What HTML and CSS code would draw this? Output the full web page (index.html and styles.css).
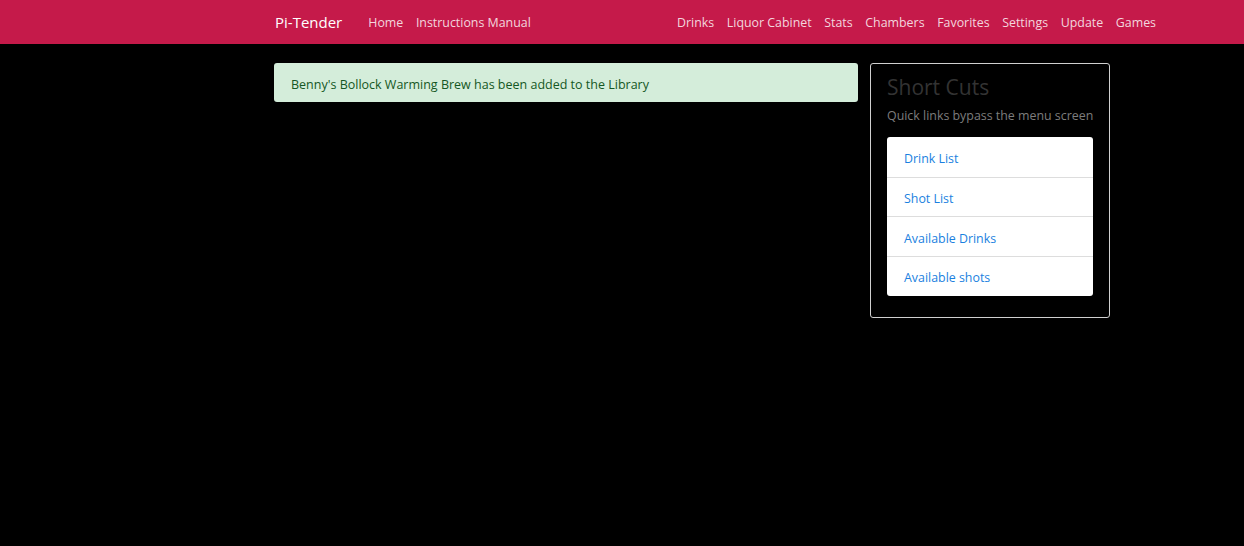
FILE: index.html
```html
<!DOCTYPE html>
<html>
<head>
<meta charset="utf-8">
<link rel="stylesheet" href="styles.css">
</head>
<body>
<nav class="navbar">
  <div class="nav-inner">
    <a class="brand">Pi-Tender</a>
    <ul class="nav nav-left">
      <li>Home</li>
      <li>Instructions Manual</li>
    </ul>
    <ul class="nav nav-right">
      <li>Drinks</li>
      <li>Liquor Cabinet</li>
      <li>Stats</li>
      <li>Chambers</li>
      <li>Favorites</li>
      <li>Settings</li>
      <li>Update</li>
      <li>Games</li>
    </ul>
  </div>
</nav>
<main class="content">
  <section class="main-col">
    <div class="alert">Benny's Bollock Warming Brew has been added to the Library</div>
  </section>
  <aside class="card">
    <h3 class="card-title">Short Cuts</h3>
    <p class="card-sub">Quick links bypass the menu screen</p>
    <ul class="list-group">
      <li class="list-item">Drink List</li>
      <li class="list-item">Shot List</li>
      <li class="list-item">Available Drinks</li>
      <li class="list-item">Available shots</li>
    </ul>
  </aside>
</main>
</body>
</html>
```
FILE: styles.css
```css
* { box-sizing: border-box; }
html, body { margin: 0; padding: 0; }
body {
  background: #000;
  font-family: "Open Sans", "Noto Sans", sans-serif;
  font-size: 12.4px;
  color: #fff;
}
.navbar {
  background: #c51a4a;
  height: 44px;
}
.nav-inner {
  display: flex;
  align-items: center;
  height: 44px;
  padding-left: 275px;
  padding-right: 88px;
}
.brand {
  font-size: 15px;
  color: #fff;
  margin-right: 26px;
}
.nav {
  list-style: none;
  margin: 0;
  padding: 0;
  display: flex;
  gap: 12.6px;
  color: #f3d6de;
}
.nav-right { margin-left: auto; }
.content {
  display: flex;
  gap: 12px;
  padding: 19px 0 0 274px;
  align-items: flex-start;
}
.main-col { width: 584px; }
.alert {
  background: #d4edda;
  color: #155724;
  border-radius: 3px;
  height: 39px;
  padding: 3px 17px 0;
  display: flex;
  align-items: center;
  font-size: 12.5px;
}
.card {
  width: 240px;
  border: 1px solid #d0d0d0;
  border-radius: 3px;
  padding: 10px 16px 21px;
}
.card-title {
  margin: 0;
  font-weight: 400;
  font-size: 21px;
  color: #333;
  line-height: 26px;
}
.card-sub {
  margin: 8px 0 13px;
  color: #7d7d7d;
  line-height: 16px;
  white-space: nowrap;
}
.list-group {
  list-style: none;
  margin: 0;
  padding: 0;
  background: #fff;
  border-radius: 3px;
  overflow: hidden;
}
.list-item {
  color: #1a7fe0;
  height: 39.7px;
  display: flex;
  align-items: center;
  padding: 3px 0 0 17px;
  border-top: 1px solid #ddd;
}
.list-item:first-child { border-top: 0; }
```
